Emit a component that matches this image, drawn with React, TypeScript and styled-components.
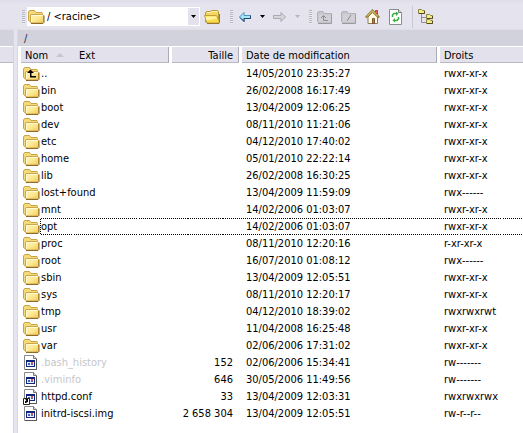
import React from "react";
import styled, { createGlobalStyle } from "styled-components";

const GlobalStyle = createGlobalStyle`
  * { box-sizing: border-box; }
  body {
    margin: 0;
    background: #e3e2ec;
    color: #000;
    font: 11px/17px "DejaVu Sans Condensed", "Tahoma", sans-serif;
    overflow: hidden;
  }
  button, select { font: inherit; color: inherit; }
`;

const Window = styled.div`
  display: flex;
  flex-direction: column;
  min-height: 100vh;
`;

const Toolbar = styled.div`
  display: flex;
  align-items: center;
  height: 30px;
  padding: 3px 0 0 22px;
  background: linear-gradient(#dfdfec 0 2px, #e5e4ee 3px 28px, #dddde7);
`;

const Grip = styled.span`
  flex: none;
  width: 3px;
  height: 14px;
  background: repeating-linear-gradient(#b6b6c2 0 1px, #ececf3 1px 2px);
`;

const Combo = styled.label`
  display: flex;
  align-items: center;
  width: 173px;
  height: 19px;
  margin-left: 2px;
  padding: 1px;
  background: #fff;
`;

const PathSelect = styled.select`
  flex: 1;
  min-width: 0;
  height: 17px;
  padding: 0 0 0 2px;
  border: 0;
  background: transparent;
  appearance: none;
  outline: 0;
`;

const ComboArrow = styled.span`
  display: flex;
  align-items: center;
  justify-content: center;
  width: 11px;
  height: 17px;
  background: #e3e2ec;
`;

const ToolGroup = styled.div<{ $gap: number; $lead: number }>`
  display: flex;
  align-items: center;
  gap: ${(p) => p.$gap}px;
  margin: 0 9px 0 ${(p) => p.$lead}px;
`;

const ToolButton = styled.button<{ $width?: number }>`
  display: flex;
  align-items: center;
  justify-content: center;
  width: ${(p) => p.$width ?? 16}px;
  height: 20px;
  padding: 0;
  border: 0;
  background: transparent;
`;

const Separator = styled.span`
  width: 1px;
  height: 22px;
  background: #c9c9d5;
`;

const Panes = styled.div`
  display: grid;
  grid-template-columns: 13px 5px minmax(0, 1fr);
  flex: 1;
`;

const Pane = styled.section`
  display: flex;
  flex-direction: column;
  background: #fff;
`;

const Splitter = styled.div`
  background: linear-gradient(90deg, #d6d6e1 0 1px, #e6e5ef 1px 4px, #d8d7e3 4px);
`;

const PathBar = styled.div`
  height: 16px;
  padding-left: 6px;
  background: #d2d2dc;
  color: #26264a;
`;

const HeaderStub = styled.div`
  height: 16px;
  margin-top: 1px;
  background: #e3e2ec;
  border-bottom: 1px solid #b9b9c3;
`;

const FileTable = styled.table`
  width: 100%;
  margin-top: 1px;
  border-collapse: separate;
  border-spacing: 0;
  table-layout: fixed;
`;

const Col = styled.col<{ $width?: number }>`
  width: ${(p) => (p.$width ? `${p.$width}px` : "auto")};
`;

const HeadLabel = styled.div<{ $end?: boolean }>`
  display: flex;
  align-items: center;
  justify-content: ${(p) => (p.$end ? "flex-end" : "flex-start")};
  height: 16px;
  padding: 1px 5px 0 4px;
  margin-right: 1px;
  background: #e3e2ec;
  border-right: 1px solid #aaaab5;
  border-bottom: 1px solid #b9b9c3;
  white-space: pre;
`;

const HeadCell = styled.th<{ $end?: boolean }>`
  height: 18px;
  padding: 0 0 2px 2px;
  font-weight: normal;
  text-align: ${(p) => (p.$end ? "right" : "left")};

  &:first-child { padding-left: 3px; }
  &:last-child ${HeadLabel} {
    margin-right: 0;
    border-right: 0;
  }
`;

const SortMark = styled.svg`
  margin: 0 15px 0 8px;
`;

const focusEdges = "repeating-linear-gradient(90deg, #000 0 1px, #fff 1px 2px) 1";

const Cell = styled.td<{ $end?: boolean; $focus?: boolean }>`
  height: 17px;
  padding: 0 ${(p) => (p.$end ? 7 : 0)}px 0 ${(p) => (p.$end ? 0 : 6)}px;
  line-height: 15px;
  border: solid transparent;
  border-width: 1px 0;
  border-image: ${(p) => (p.$focus ? focusEdges : "none")};
  text-align: ${(p) => (p.$end ? "right" : "left")};
  white-space: nowrap;
`;

const NameCell = styled.td`
  height: 17px;
  padding: 0 0 0 5px;
`;

const NameLine = styled.div`
  display: flex;
  align-items: center;
  height: 17px;
`;

const NameText = styled.span<{ $dim?: boolean; $focus?: boolean }>`
  flex: 1;
  height: 17px;
  line-height: 15px;
  padding-left: 1px;
  border: solid transparent;
  border-width: 1px 0;
  border-image: ${(p) => (p.$focus ? focusEdges : "none")};
  background: ${(p) =>
    p.$focus ? "repeating-linear-gradient(#000 0 1px, #fff 1px 2px) left / 1px 100% no-repeat" : "none"};
  color: ${(p) => (p.$dim ? "#c6c6cb" : "#000")};
`;

const Icon = styled.svg`
  display: block;
  flex: none;
`;

function FolderIcon({ up = false }: { up?: boolean }) {
  return (
    <Icon width="17" height="16" viewBox="0 0 17 16" aria-hidden>
      <defs>
        <linearGradient id="folder-front" x1="0" y1="0" x2="1" y2="1">
          <stop offset="0" stopColor="#fff6b8" />
          <stop offset="0.5" stopColor="#fde992" />
          <stop offset="1" stopColor="#f0c95a" />
        </linearGradient>
      </defs>
      <path d="M.5 4V3l1-1.500h5L8 3.500h6l.5 1V13h-12l-2-1.500z" fill="#f5da7c" stroke="#c9a444" />
      <path d="M3 5.500h11.500l1 1V13l-1 1H3.500l-1-1V6z" fill="url(#folder-front)" stroke="#cfa545" />
      <path d="M3.500 13V6.500h11" fill="none" stroke="#fffbd6" />
      <path d="M3 14.500h12l1-1V6.500" fill="none" stroke="#8f6b2a" />
      {up && <path d="M7.500 3.500 11 7H8.500v3H13v1.500H7V7H4z" fill="#000" />}
    </Icon>
  );
}

function FileIcon({ link = false }: { link?: boolean }) {
  return (
    <Icon width="17" height="16" viewBox="0 0 17 16" aria-hidden>
      <path d="M1.500.5h9l3 3v11h-12z" fill="#fff" stroke="#8a8a8c" />
      <path d="M10.500.5v3h3" fill="#ddd" stroke="#77777a" />
      <path d="M13.500 4v10.500H2" fill="none" stroke="#55555a" />
      <path d="M3 5h9v7H3z" fill="#10257b" />
      <path d="M4 7h7v4H4z" fill="#eef1fb" />
      <path d="M5 8h2v2H5z" fill="#3b62c9" />
      <path d="M8 7h2v2H8z" fill="#d25b57" />
      <path d="M8 9h2v1H8z" fill="#4169c0" />
      {link && (
        <>
          <path d="M.5 9.500h6v6h-6z" fill="#fff" stroke="#222" />
          <path d="M2 14v-1.500L3.500 11h-1v-1H5v3h-.5L3 14z" fill="#000" />
        </>
      )}
    </Icon>
  );
}

function OpenFolderIcon() {
  return (
    <Icon width="18" height="16" viewBox="0 0 18 16" aria-hidden>
      <path d="M2.500 13V4l1-1.500h4l1-1h6l1 1V13z" fill="#f2d660" stroke="#b5973a" />
      <path d="M4 3.500h4l1-1h5" fill="none" stroke="#fff4a8" />
      <path d="M1.500 6.500h12l3 6.500-1 1H4z" fill="#f9dc4c" stroke="#c2a035" />
      <path d="M2.500 7.500H13l1 2-10.500 2z" fill="#fff3a0" />
      <path d="M4 14.500h12l.5-1.500V5" fill="none" stroke="#9a792b" />
    </Icon>
  );
}

function GreyFolderIcon({ up = false }: { up?: boolean }) {
  return (
    <Icon width="16" height="16" viewBox="0 0 16 16" aria-hidden>
      <path d="M.5 3.500 2 2.500h4l1.500 2h7v9H1.500l-1-1z" fill="#c7c7cd" stroke="#b0b0b6" />
      <path d="M2 5.500h12v8H2z" fill="#d0d0d6" />
      <path d="M1 14.500h13.500V5" fill="none" stroke="#9a9aa2" />
      {up ? (
        <path d="M6.500 11.500V7m-2.500 2 2.500-2.500L9 9m-2.500 2.500H11" fill="none" stroke="#8b8b94" />
      ) : (
        <path d="m6 12 4-6" stroke="#8b8b94" />
      )}
    </Icon>
  );
}

function ArrowIcon({ forward = false }: { forward?: boolean }) {
  return forward ? (
    <Icon width="14" height="12" viewBox="0 0 14 12" aria-hidden>
      <path d="M.5 4.500H8v-3L12.500 6 8 10.500v-3H.5z" fill="#d5d5dc" stroke="#aaaab3" />
    </Icon>
  ) : (
    <Icon width="14" height="12" viewBox="0 0 14 12" aria-hidden>
      <path d="M12.500 4.500H6v-3L1.500 6 6 10.500v-3h6.500z" fill="#a9e5f8" stroke="#4a94c4" />
      <path d="M2 6.500 6 10.500v-3h6.500v-3" fill="none" stroke="#1c456c" />
    </Icon>
  );
}

function Caret({ dim = false }: { dim?: boolean }) {
  return (
    <Icon width="5" height="3" viewBox="0 0 5 3" aria-hidden>
      <path d="M0 0h5L2.500 3z" fill={dim ? "#b6b6be" : "#000"} />
    </Icon>
  );
}

function HomeIcon() {
  return (
    <Icon width="16" height="16" viewBox="0 0 16 16" aria-hidden>
      <path d="M10.500 1.500h2V7h-2z" fill="#ed605d" stroke="#b04442" />
      <path d="M3 8 7.500 3.500 12.500 8v6.500H3z" fill="#fffbe0" stroke="#8d7a55" />
      <path d="m.8 8.500 6.700-7 6.700 7" fill="none" stroke="#8a7136" strokeWidth="2" />
      <path d="m2 7.500 5.500-5.700L13 7.500" fill="none" stroke="#ffe66a" />
      <path d="M7.500 9.500h2v5h-2z" fill="#b98244" stroke="#7d5630" />
    </Icon>
  );
}

function RefreshIcon() {
  return (
    <Icon width="14" height="16" viewBox="0 0 14 16" aria-hidden>
      <path d="M.5.5h9l3 3v12H.5z" fill="#fff" stroke="#84908b" />
      <path d="M9.500.5v3h3" fill="#ddd" stroke="#727d79" />
      <path d="M3.500 8V6L5 4.500h2M9.500 8v2L8 11.500H6" fill="none" stroke="#39aa3d" strokeWidth="1.500" />
      <path d="M7 2.500 9.500 4.500 7 7zM6 9l-2.500 2.500L6 13.500z" fill="#39aa3d" />
    </Icon>
  );
}

function TreeIcon() {
  return (
    <Icon width="16" height="16" viewBox="0 0 16 16" aria-hidden>
      <path d="M3.500 5v8.500H8M3.500 8.500H8" fill="none" stroke="#8d8da5" />
      {[[0, 0], [8, 5], [8, 10]].map(([x, y]) => (
        <g key={`${x}-${y}`} transform={`translate(${x} ${y})`}>
          <path d="M.5.5h3l1 1h2v3h-6z" fill="#f2ec83" stroke="#8b843c" />
          <path d="M1 4.500h5.500V2" fill="none" stroke="#504c20" />
        </g>
      ))}
    </Icon>
  );
}

type Entry = {
  name: string;
  date: string;
  rights: string;
  kind?: "up" | "file" | "link";
  size?: string;
  hidden?: boolean;
};

const entries: Entry[] = [
  { name: "..", date: "14/05/2010 23:35:27", rights: "rwxr-xr-x", kind: "up" },
  { name: "bin", date: "26/02/2008 16:17:49", rights: "rwxr-xr-x" },
  { name: "boot", date: "13/04/2009 12:06:25", rights: "rwxr-xr-x" },
  { name: "dev", date: "08/11/2010 11:21:06", rights: "rwxr-xr-x" },
  { name: "etc", date: "04/12/2010 17:40:02", rights: "rwxr-xr-x" },
  { name: "home", date: "05/01/2010 22:22:14", rights: "rwxr-xr-x" },
  { name: "lib", date: "26/02/2008 16:30:25", rights: "rwxr-xr-x" },
  { name: "lost+found", date: "13/04/2009 11:59:09", rights: "rwx------" },
  { name: "mnt", date: "14/02/2006 01:03:07", rights: "rwxr-xr-x" },
  { name: "opt", date: "14/02/2006 01:03:07", rights: "rwxr-xr-x" },
  { name: "proc", date: "08/11/2010 12:20:16", rights: "r-xr-xr-x" },
  { name: "root", date: "16/07/2010 01:08:12", rights: "rwx------" },
  { name: "sbin", date: "13/04/2009 12:05:51", rights: "rwxr-xr-x" },
  { name: "sys", date: "08/11/2010 12:20:17", rights: "rwxr-xr-x" },
  { name: "tmp", date: "04/12/2010 18:39:02", rights: "rwxrwxrwt" },
  { name: "usr", date: "11/04/2008 16:25:48", rights: "rwxr-xr-x" },
  { name: "var", date: "02/06/2006 17:31:02", rights: "rwxr-xr-x" },
  { name: ".bash_history", size: "152", date: "02/06/2006 15:34:41", rights: "rw-------", kind: "file", hidden: true },
  { name: ".viminfo", size: "646", date: "30/05/2006 11:49:56", rights: "rw-------", kind: "file", hidden: true },
  { name: "httpd.conf", size: "33", date: "13/04/2009 12:03:31", rights: "rwxrwxrwx", kind: "link" },
  { name: "initrd-iscsi.img", size: "2 658 304", date: "13/04/2009 12:05:51", rights: "rw-r--r--", kind: "file" },
];

export default function App() {
  const focused = "opt";
  return (
    <Window>
      <GlobalStyle />
      <Toolbar role="toolbar">
        <Grip />
        <Combo>
          <FolderIcon />
          <PathSelect aria-label="Répertoire">
            <option>/ &lt;racine&gt;</option>
          </PathSelect>
          <ComboArrow><Caret /></ComboArrow>
        </Combo>
        <ToolGroup $gap={8} $lead={3}>
          <ToolButton $width={18} aria-label="Ouvrir"><OpenFolderIcon /></ToolButton>
        </ToolGroup>
        <Grip />
        <ToolGroup $gap={8} $lead={5}>
          <ToolButton $width={14} aria-label="Précédent"><ArrowIcon /></ToolButton>
          <ToolButton $width={5} aria-label="Historique précédent"><Caret /></ToolButton>
          <ToolButton $width={14} aria-label="Suivant" disabled><ArrowIcon forward /></ToolButton>
          <ToolButton $width={5} aria-label="Historique suivant" disabled><Caret dim /></ToolButton>
        </ToolGroup>
        <Grip />
        <ToolGroup $gap={8} $lead={5}>
          <ToolButton aria-label="Dossier parent" disabled><GreyFolderIcon up /></ToolButton>
          <ToolButton aria-label="Dossier racine" disabled><GreyFolderIcon /></ToolButton>
          <ToolButton aria-label="Dossier personnel"><HomeIcon /></ToolButton>
          <ToolButton $width={14} aria-label="Actualiser"><RefreshIcon /></ToolButton>
        </ToolGroup>
        <Separator />
        <ToolGroup $gap={8} $lead={5}>
          <ToolButton aria-label="Arborescence"><TreeIcon /></ToolButton>
        </ToolGroup>
      </Toolbar>
      <Panes>
        <Pane>
          <PathBar />
          <HeaderStub />
        </Pane>
        <Splitter />
        <Pane>
          <PathBar>/</PathBar>
          <FileTable>
            <colgroup>
              <Col $width={152} />
              <Col $width={70} />
              <Col $width={198} />
              <Col />
            </colgroup>
            <thead>
              <tr>
                <HeadCell>
                  <HeadLabel>
                    Nom
                    <SortMark width="8" height="4" viewBox="0 0 8 4" aria-hidden>
                      <path d="M0 4 4 0l4 4z" fill="#c5c5cd" />
                    </SortMark>
                    Ext
                  </HeadLabel>
                </HeadCell>
                <HeadCell $end><HeadLabel $end>Taille</HeadLabel></HeadCell>
                <HeadCell><HeadLabel>Date de modification</HeadLabel></HeadCell>
                <HeadCell><HeadLabel>Droits</HeadLabel></HeadCell>
              </tr>
            </thead>
            <tbody>
              {entries.map((e) => {
                const focus = e.name === focused;
                return (
                  <tr key={e.name}>
                    <NameCell>
                      <NameLine>
                        {e.kind === "file" || e.kind === "link" ? (
                          <FileIcon link={e.kind === "link"} />
                        ) : (
                          <FolderIcon up={e.kind === "up"} />
                        )}
                        <NameText $dim={e.hidden} $focus={focus}>{e.name}</NameText>
                      </NameLine>
                    </NameCell>
                    <Cell $end $focus={focus}>{e.size}</Cell>
                    <Cell $focus={focus}>{e.date}</Cell>
                    <Cell $focus={focus}>{e.rights}</Cell>
                  </tr>
                );
              })}
            </tbody>
          </FileTable>
        </Pane>
      </Panes>
    </Window>
  );
}
